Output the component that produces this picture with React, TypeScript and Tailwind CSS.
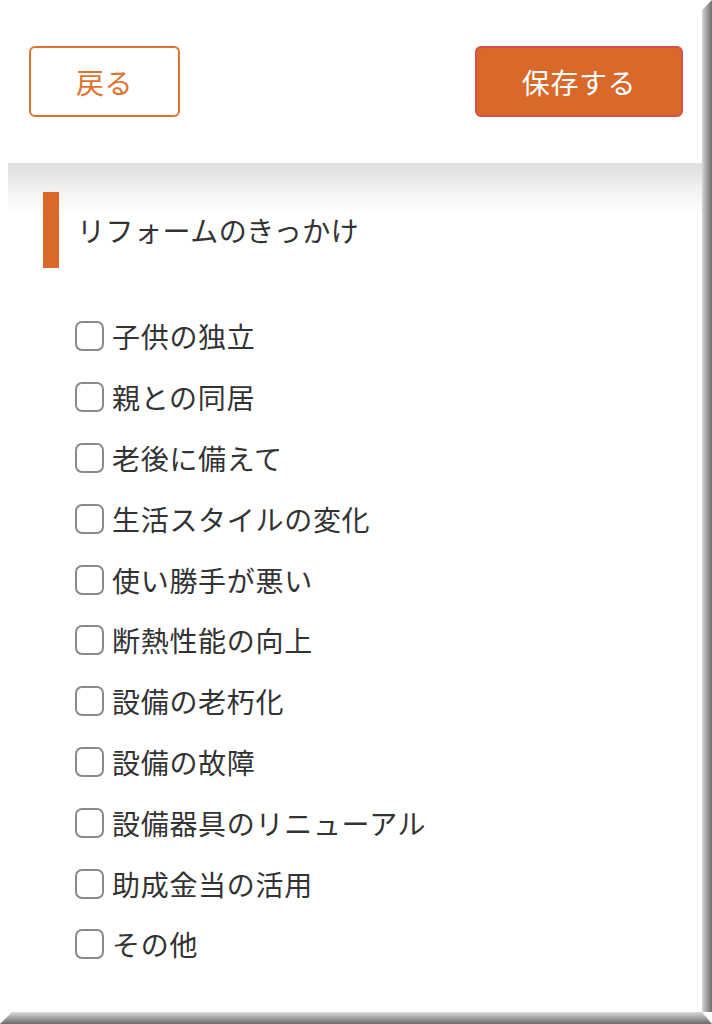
const reasons = [
  '子供の独立',
  '親との同居',
  '老後に備えて',
  '生活スタイルの変化',
  '使い勝手が悪い',
  '断熱性能の向上',
  '設備の老朽化',
  '設備の故障',
  '設備器具のリニューアル',
  '助成金当の活用',
  'その他',
];

const font = "font-['Noto_Sans_CJK_JP','Noto_Sans',sans-serif]";

export default function App() {
  return (
    <div className={`w-[712px] h-[1024px] bg-white flex flex-col ${font}`}>
      <div className="flex flex-1 min-h-0">
        <div className="flex-1 flex flex-col">
          {/* header */}
          <header className="h-[163px] flex justify-between items-start pt-[46px] pl-[29px] pr-[19px]">
            <button className="w-[151px] h-[71px] rounded-[6px] border-2 border-[#e0722f] bg-white text-[#e0722f] text-[28px] leading-none tracking-[0.6px]">
              戻る
            </button>
            <button className="w-[208px] h-[71px] rounded-[6px] border-2 border-[#d4504a] bg-[#d9682b] text-white text-[28px] leading-none tracking-[0.6px]">
              保存する
            </button>
          </header>

          {/* section */}
          <section className="flex-1 ml-[8px] bg-[linear-gradient(to_bottom,#dedede,#f4f4f4_30px,#ffffff_52px)] pt-[29px]">
            <div className="flex items-center h-[76px] pl-[35px]">
              <div className="w-[16px] h-[76px] bg-[#d9682b]" />
              <h2 className="ml-[18px] text-[28px] text-[#333] leading-none tracking-[0.5px]">リフォームのきっかけ</h2>
            </div>

            <ul className="mt-[38px] pl-[67px]">
              {reasons.map((r) => (
                <li key={r} className="h-[60.8px] flex items-center">
                  <span className="w-[29px] h-[30px] rounded-[7px] border-[2.5px] border-[#8a8a8a] bg-white shrink-0" />
                  <span className="ml-[8px] text-[28px] text-[#333] leading-none tracking-[0.7px]">{r}</span>
                </li>
              ))}
            </ul>
          </section>
        </div>

        {/* right frame edge */}
        <div className="w-[10px] bg-[linear-gradient(to_right,#d6d6d6,#a0a0a0_50%,#6e6e6e)] [clip-path:polygon(0_10px,100%_0,100%_100%,0_100%)]" />
      </div>

      {/* bottom frame edge */}
      <div className="h-[12px] bg-[linear-gradient(to_bottom,#dadada,#a2a2a2_50%,#6a6a6a)] [clip-path:polygon(12px_0,calc(100%-10px)_0,100%_100%,0_100%)]" />
    </div>
  );
}
